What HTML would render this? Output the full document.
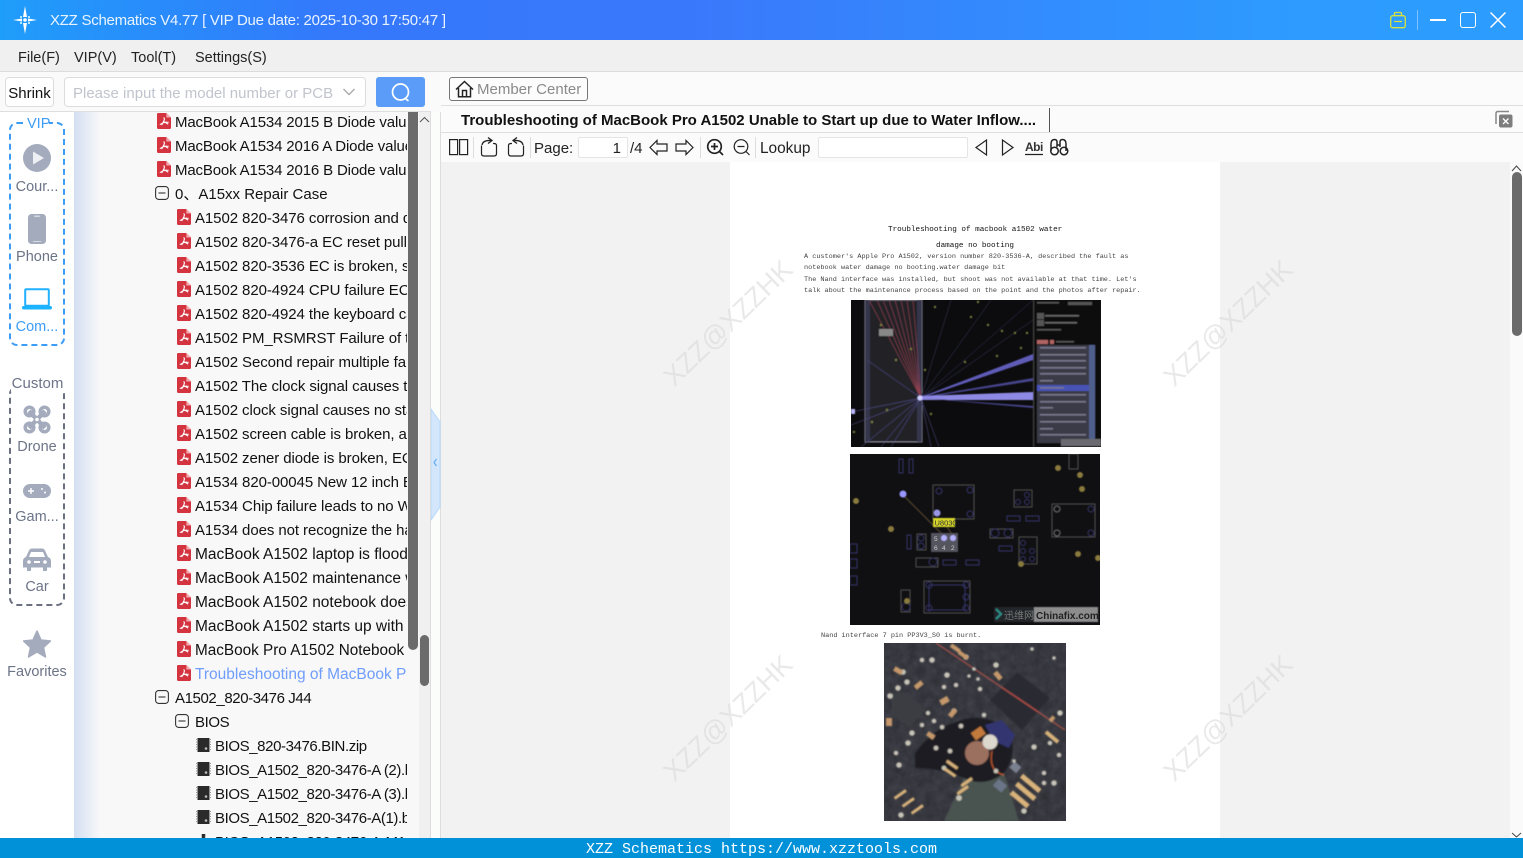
<!DOCTYPE html>
<html><head><meta charset="utf-8"><style>
*{box-sizing:border-box}
html,body{margin:0;padding:0;width:1523px;height:858px;overflow:hidden;background:#fafafa;font-family:"Liberation Sans","Noto Sans CJK SC",sans-serif;color:#111}
.a{position:absolute}
.t{position:absolute;white-space:nowrap;font-size:15px;line-height:26px;height:24px;overflow:hidden}
.r1{left:175px;width:232px}.r2{left:195px;width:212px;letter-spacing:-.08px}.r3{left:215px;width:192px}
.w{font-size:15.5px;letter-spacing:0}
.n{letter-spacing:-.15px}
.b{letter-spacing:-.4px}
.lb{position:absolute;left:9px;width:56px;text-align:center;font-size:14.5px;color:#6c7488;line-height:20px}
.ic{position:absolute;width:14px;height:16px}
.m{position:absolute;top:48px;font-size:14.5px;line-height:20px;color:#222}
.tb{position:absolute;font-size:15px;line-height:22px;color:#222}
.sep{position:absolute;top:137px;width:1px;height:21px;background:#ddd}
.pt{position:absolute;left:804px;font:6.85px/9px "Liberation Mono",monospace;color:#444;white-space:nowrap}
.wm{position:absolute;font-size:27px;line-height:36px;color:#d8d8d8;opacity:.55;transform:rotate(-44deg);white-space:nowrap;width:190px;text-align:center}
</style></head><body>
<svg width="0" height="0" style="position:absolute"><defs>
<symbol id="pdf" viewBox="0 0 15 18" preserveAspectRatio="none"><path d="M1 0H10L15 5V16.500Q15 18 13.500 18H1.500Q0 18 0 16.500V1.500Q0 0 1 0Z" fill="#d3343f"/><path d="M10 0V5H15Z" fill="#f3a9ae"/><path d="M7 5Q8.500 5.500 7.500 8.500L5 13.500M7 9.500L12 12.500M3 13L8 10.500Q10.500 10 12.500 10.500" fill="none" stroke="#fff" stroke-width="1.200"/></symbol>
<symbol id="minus" viewBox="0 0 14 14"><rect x=".6" y=".6" width="12.800" height="12.800" rx="3" fill="none" stroke="#333" stroke-width="1.100"/><path d="M3.500 7H10.500" stroke="#333" stroke-width="1.100"/></symbol>
<symbol id="chip" viewBox="0 0 15 14"><rect x="1.500" y="0" width="12" height="14" fill="#2a2a2a"/><path d="M0 1.500H2M0 4H2M0 6.500H2M0 9H2M0 11.500H2M13 1.500H15M13 4H15M13 6.500H15M13 9H15M13 11.500H15" stroke="#999" stroke-width="1"/><circle cx="10" cy="10.500" r="1.300" fill="#bbb"/></symbol>
<filter id="bl"><feGaussianBlur stdDeviation=".5"/></filter>
<filter id="bl2"><feGaussianBlur stdDeviation=".75"/></filter>
<filter id="tex" x="0" y="0" width="100%" height="100%" color-interpolation-filters="sRGB"><feTurbulence type="fractalNoise" baseFrequency=".12" numOctaves="3" seed="4"/><feColorMatrix values="0 0 0 0 .1 0 0 0 0 .1 0 0 0 0 .12 .55 0 0 0 0"/></filter>
</defs></svg>

<!-- title bar -->
<div class="a" style="left:0;top:0;width:1523px;height:40px;background:linear-gradient(90deg,#1f9dfb 0,#3478fb 22%,#3a78fb 45%,#2d9bff 85%,#2d9cff 100%)"></div>
<svg class="a" style="left:12px;top:5px" width="26" height="30" viewBox="0 0 26 30"><path d="M13 1L15 12H11ZM13 29L11 18H15ZM1 15L10 13.500V16.500ZM25 15L16 16.500V13.500Z" fill="#fff"/><circle cx="13" cy="15" r="1.800" fill="#fff"/><circle cx="9" cy="12" r="1" fill="#dff"/><circle cx="17" cy="12" r="1" fill="#dff"/><circle cx="9" cy="18" r="1" fill="#dff"/><circle cx="17" cy="18" r="1" fill="#dff"/></svg>
<div class="a" style="left:50px;top:12px;font-size:15px;letter-spacing:-.26px;line-height:18px;color:#e9f3ff;white-space:nowrap">XZZ Schematics V4.77 [ VIP Due date: 2025-10-30 17:50:47 ]</div>
<svg class="a" style="left:1389px;top:11px" width="18" height="18" viewBox="0 0 18 18" fill="none" stroke="#d6e33c" stroke-width="1.300"><rect x="1.700" y="4.700" width="14.600" height="12" rx="2"/><path d="M5.500 4.500V2.500Q5.500 1.500 6.500 1.500H11.500Q12.500 1.500 12.500 2.500V4.500M5 10.500H13"/></svg>
<div class="a" style="left:1417px;top:10px;width:1px;height:20px;background:#7fc0ff"></div>
<div class="a" style="left:1430px;top:19px;width:16px;height:2px;background:#fff"></div>
<div class="a" style="left:1460px;top:12px;width:16px;height:16px;border:1.600px solid #fff;border-radius:3px"></div>
<svg class="a" style="left:1490px;top:12px" width="16" height="16" stroke="#fff" stroke-width="1.500"><path d="M.5.500L15.500 15.500M15.500.500L.5 15.500"/></svg>

<!-- menu -->
<div class="a" style="left:0;top:40px;width:1523px;height:32px;background:#f0f0f0;border-bottom:1px solid #dcdcdc"></div>
<div class="m" style="left:18px">File(F)</div><div class="m" style="left:74px">VIP(V)</div><div class="m" style="left:131px">Tool(T)</div><div class="m" style="left:195px">Settings(S)</div>

<!-- left toolbar -->
<div class="a" style="left:0;top:72px;width:431px;height:40px;background:#fafafa;border-bottom:1px solid #dedede"></div>
<div class="a" style="left:5px;top:77px;width:49px;height:30px;background:#fff;border:1px solid #ddd;border-radius:4px;font-size:15px;line-height:31px;text-align:center;color:#111">Shrink</div>
<div class="a" style="left:64px;top:77px;width:302px;height:30px;background:#fff;border:1px solid #ddd;border-radius:4px;padding-left:8px;font-size:15px;line-height:31px;color:#c0c4cc;white-space:nowrap">Please input the model number or PCB</div>
<svg class="a" style="left:343px;top:88px" width="12" height="8" fill="none" stroke="#aaa" stroke-width="1.400"><path d="M.5 1L6 6.500L11.500 1"/></svg>
<div class="a" style="left:376px;top:77px;width:49px;height:30px;background:#5b9cf9;border-radius:3px"></div>
<svg class="a" style="left:390px;top:82px" width="22" height="21" fill="none" stroke="#fff" stroke-width="1.700"><circle cx="10.500" cy="10" r="8"/><path d="M15.500 16.500L18.500 19"/></svg>

<!-- sidebar -->
<div class="a" style="left:0;top:112px;width:74px;height:726px;background:#fff"></div>
<div class="a" style="left:9px;top:122px;width:56px;height:224px;border:2px dashed #3c9cf6;border-radius:8px"></div>
<div class="a" style="left:27px;top:114px;width:22px;height:18px;background:#fff;color:#3c9cf6;font-size:14.500px;line-height:20px;text-align:center">VIP</div>
<svg class="a" style="left:23px;top:144px" width="28" height="28"><circle cx="14" cy="14" r="14" fill="#a3abbd"/><path d="M10 7.500L21 14L10 20.500Z" fill="#eef0f4"/></svg>
<div class="lb" style="top:177px">Cour...</div>
<svg class="a" style="left:28px;top:214px" width="18" height="30"><rect width="18" height="30" rx="3.500" fill="#a3abbd"/><rect x="6" y="1.500" width="6" height="1.500" rx=".7" fill="#d5d9e2"/><rect x="5" y="27" width="8" height="1" fill="#d5d9e2"/></svg>
<div class="lb" style="top:247px">Phone</div>
<svg class="a" style="left:22px;top:288px" width="30" height="22"><rect x="3.200" y="1.200" width="23.600" height="16.600" rx="1" fill="none" stroke="#21b0ff" stroke-width="2"/><rect x="0" y="18" width="30" height="3.500" rx="1.700" fill="#1cb4ff"/></svg>
<div class="lb" style="top:317px;color:#3c9cf6">Com...</div>

<div class="a" style="left:9px;top:386px;width:56px;height:220px;border:2px dashed #6a7080;border-radius:8px"></div>
<div class="a" style="left:11px;top:374px;width:53px;height:18px;background:#fff;color:#6c7488;font-size:15px;line-height:20px;text-align:center">Custom</div>
<svg class="a" style="left:23px;top:405px" width="28" height="29" fill="none" stroke="#a3abbd"><path d="M6 6L22 23M22 6L6 23" stroke-width="4.500"/><circle cx="6.500" cy="6.500" r="4.300" stroke-width="3.500"/><circle cx="21.500" cy="6.500" r="4.300" stroke-width="3.500"/><circle cx="6.500" cy="22.500" r="4.300" stroke-width="3.500"/><circle cx="21.500" cy="22.500" r="4.300" stroke-width="3.500"/><circle cx="14" cy="14.500" r="2.500" fill="#fff" stroke-width="1.500"/></svg>
<div class="lb" style="top:437px">Drone</div>
<svg class="a" style="left:23px;top:484px" width="28" height="14"><rect width="28" height="14" rx="7" fill="#a3abbd"/><path d="M5 7H11M8 4V10" stroke="#fff" stroke-width="1.400"/><circle cx="19" cy="5" r="1" fill="#fff"/><circle cx="22" cy="8.500" r="1" fill="#fff"/></svg>
<div class="lb" style="top:507px">Gam...</div>
<svg class="a" style="left:23px;top:548px" width="28" height="23"><path d="M3 9L6 2.500Q7 .5 9 .5H19Q21 .5 22 2.500L25 9Q28 10 28 13V19.500H24V23H20V19.500H8V23H4V19.500H0V13Q0 10 3 9Z" fill="#a3abbd"/><path d="M6 9L8 4H20L22 9Z" fill="#fff"/><circle cx="6" cy="14" r="1.800" fill="#fff"/><circle cx="22" cy="14" r="1.800" fill="#fff"/><rect x="11" y="13" width="6" height="2" fill="#fff"/></svg>
<div class="lb" style="top:577px">Car</div>
<svg class="a" style="left:23px;top:630px" width="28" height="28"><path d="M14 1L18 10L27.500 11L20.500 17.500L22.500 27L14 22L5.500 27L7.500 17.500L.5 11L10 10Z" fill="#a3abbd" stroke="#a3abbd" stroke-linejoin="round" stroke-width="1.500"/></svg>
<div class="lb" style="top:662px;left:2px;width:70px">Favorites</div>

<!-- tree -->
<div class="a" style="left:74px;top:112px;width:334px;height:726px;background:linear-gradient(90deg,#d3dff2 0,#f8f8f8 26px)"></div>
<div class="a" style="left:408px;top:112px;width:11px;height:726px;background:#f8f8f8"></div>
<div class="a" style="left:419px;top:112px;width:11px;height:726px;background:#f0f0f0"></div>
<div class="a" style="left:408px;top:112px;width:10px;height:538px;background:#6b6b6b;border-radius:0 0 5px 5px"></div>
<div class="a" style="left:420px;top:635px;width:9px;height:51px;background:#6b6b6b;border-radius:5px"></div>
<svg class="a" style="left:419px;top:116px" width="11" height="8" fill="none" stroke="#555"><path d="M1 6L5.500 1.500L10 6"/></svg>
<div class="a" style="left:430px;top:112px;width:11px;height:726px;background:#fbfdfb;border-left:1px solid #ddd;border-right:1px solid #ddd"></div>
<svg class="a" style="left:431px;top:408px" width="10" height="113"><path d="M0 1L9 14V99L0 112Z" fill="#d3e6fb" stroke="#b5d8fb"/><path d="M5.500 51L3 54.500L5.500 58" fill="none" stroke="#62aef5" stroke-width="1.200"/></svg>

<svg class="ic" style="left:157px;top:113px"><use href="#pdf"/></svg><div class="t r1 n" style="top:110px">MacBook A1534 2015 B Diode value measurement</div>
<svg class="ic" style="left:157px;top:137px"><use href="#pdf"/></svg><div class="t r1 n" style="top:134px">MacBook A1534 2016 A Diode value measurement</div>
<svg class="ic" style="left:157px;top:161px"><use href="#pdf"/></svg><div class="t r1 n" style="top:158px">MacBook A1534 2016 B Diode value measurement</div>
<svg class="a" style="left:155px;top:186px" width="14" height="14"><use href="#minus"/></svg><div class="t r1" style="top:182px">0、A15xx Repair Case</div>
<svg class="ic" style="left:177px;top:209px"><use href="#pdf"/></svg><div class="t r2" style="top:206px">A1502 820-3476 corrosion and damage</div>
<svg class="ic" style="left:177px;top:233px"><use href="#pdf"/></svg><div class="t r2" style="top:230px">A1502 820-3476-a EC reset pull-up</div>
<svg class="ic" style="left:177px;top:257px"><use href="#pdf"/></svg><div class="t r2" style="top:254px">A1502 820-3536 EC is broken, so no</div>
<svg class="ic" style="left:177px;top:281px"><use href="#pdf"/></svg><div class="t r2" style="top:278px">A1502 820-4924 CPU failure EC power</div>
<svg class="ic" style="left:177px;top:305px"><use href="#pdf"/></svg><div class="t r2" style="top:302px">A1502 820-4924 the keyboard cannot</div>
<svg class="ic" style="left:177px;top:329px"><use href="#pdf"/></svg><div class="t r2" style="top:326px">A1502 PM_RSMRST Failure of trigger</div>
<svg class="ic" style="left:177px;top:353px"><use href="#pdf"/></svg><div class="t r2" style="top:350px">A1502 Second repair multiple faults</div>
<svg class="ic" style="left:177px;top:377px"><use href="#pdf"/></svg><div class="t r2" style="top:374px">A1502 The clock signal causes the</div>
<svg class="ic" style="left:177px;top:401px"><use href="#pdf"/></svg><div class="t r2" style="top:398px">A1502 clock signal causes no startup</div>
<svg class="ic" style="left:177px;top:425px"><use href="#pdf"/></svg><div class="t r2" style="top:422px">A1502 screen cable is broken, and</div>
<svg class="ic" style="left:177px;top:449px"><use href="#pdf"/></svg><div class="t r2" style="top:446px">A1502 zener diode is broken, ECU</div>
<svg class="ic" style="left:177px;top:473px"><use href="#pdf"/></svg><div class="t r2" style="top:470px">A1534 820-00045 New 12 inch EC</div>
<svg class="ic" style="left:177px;top:497px"><use href="#pdf"/></svg><div class="t r2" style="top:494px">A1534 Chip failure leads to no Wi-Fi</div>
<svg class="ic" style="left:177px;top:521px"><use href="#pdf"/></svg><div class="t r2" style="top:518px">A1534 does not recognize the hard</div>
<svg class="ic" style="left:177px;top:545px"><use href="#pdf"/></svg><div class="t r2 w" style="top:542px">MacBook A1502 laptop is flooded</div>
<svg class="ic" style="left:177px;top:569px"><use href="#pdf"/></svg><div class="t r2 w" style="top:566px">MacBook A1502 maintenance with</div>
<svg class="ic" style="left:177px;top:593px"><use href="#pdf"/></svg><div class="t r2 w" style="top:590px">MacBook A1502 notebook does not</div>
<svg class="ic" style="left:177px;top:617px"><use href="#pdf"/></svg><div class="t r2 w" style="top:614px">MacBook A1502 starts up with water</div>
<svg class="ic" style="left:177px;top:641px"><use href="#pdf"/></svg><div class="t r2" style="top:638px;font-size:15.3px;letter-spacing:0">MacBook Pro A1502 Notebook water</div>
<svg class="ic" style="left:177px;top:665px"><use href="#pdf"/></svg><div class="t r2 w" style="top:662px;color:#6f9dfb">Troubleshooting of MacBook Pro A1502</div>
<svg class="a" style="left:155px;top:690px" width="14" height="14"><use href="#minus"/></svg><div class="t r1 b" style="top:686px">A1502_820-3476 J44</div>
<svg class="a" style="left:175px;top:714px" width="14" height="14"><use href="#minus"/></svg><div class="t r2 b" style="top:710px">BIOS</div>
<svg class="a" style="left:196px;top:738px" width="15" height="14"><use href="#chip"/></svg><div class="t r3 b" style="top:734px">BIOS_820-3476.BIN.zip</div>
<svg class="a" style="left:196px;top:762px" width="15" height="14"><use href="#chip"/></svg><div class="t r3 b" style="top:758px">BIOS_A1502_820-3476-A (2).bin</div>
<svg class="a" style="left:196px;top:786px" width="15" height="14"><use href="#chip"/></svg><div class="t r3 b" style="top:782px">BIOS_A1502_820-3476-A (3).bin</div>
<svg class="a" style="left:196px;top:810px" width="15" height="14"><use href="#chip"/></svg><div class="t r3 b" style="top:806px">BIOS_A1502_820-3476-A(1).bin</div>
<svg class="a" style="left:196px;top:834px" width="15" height="4"><use href="#chip"/></svg><div class="t r3 b" style="top:830px">BIOS_A1502_820-3476-A-M1.bin</div>

<!-- right header -->
<div class="a" style="left:441px;top:72px;width:1082px;height:90px;background:#fbfbfb"></div>
<div class="a" style="left:441px;top:105px;width:1082px;height:1px;background:#dedede"></div>
<div class="a" style="left:441px;top:132px;width:1082px;height:1px;background:#dedede"></div>
<div class="a" style="left:449px;top:77px;width:139px;height:24px;border:1px solid #777;border-radius:3px;background:#fcfcfc"></div>
<svg class="a" style="left:455px;top:80px" width="19" height="18" fill="none" stroke="#222" stroke-width="1.500"><path d="M1 9.500L9.500 1.500L18 9.500M3.500 8V16.800H15.500V8M7.500 16.800V10.500H11.500V16.800"/></svg>
<div class="tb" style="left:477px;top:79px;color:#8a8a8a">Member Center</div>
<div class="a" style="left:461px;top:110px;font-size:15px;font-weight:bold;line-height:21px;color:#111;white-space:nowrap">Troubleshooting of MacBook Pro A1502 Unable to Start up due to Water Inflow....</div>
<div class="a" style="left:1049px;top:108px;width:1px;height:24px;background:#555"></div>
<svg class="a" style="left:1494px;top:110px" width="19" height="18"><path d="M2 14V3.500Q2 1.500 4 1.500H15" fill="none" stroke="#888" stroke-width="1.500"/><rect x="5" y="4.500" width="13.500" height="13" rx="2" fill="#7d7d7d"/><path d="M9 8.500L14.500 14M14.500 8.500L9 14" stroke="#fff" stroke-width="1.300"/></svg>

<!-- pdf toolbar -->
<svg class="a" style="left:449px;top:137px" width="625" height="21" fill="none" stroke="#222" stroke-width="1.200">
<rect x=".6" y="2.600" width="8" height="15"/><rect x="10.600" y="2.600" width="8" height="15"/>
<path d="M32.500 8.500V16.500Q32.500 19 35 19H45Q47.500 19 47.500 16.500V8.500Q47.500 6.500 45 6.500H44"/><path d="M33 8Q34 3 42 3.500M39 .5L43 3.500L39 6.500" stroke-width="1.300"/>
<path d="M74.500 8.500V16.500Q74.500 19 72 19H62Q59.500 19 59.500 16.500V8.500Q59.500 6.500 62 6.500H63"/><path d="M74 8Q73 3 65 3.500M68 .5L64 3.500L68 6.500" stroke-width="1.300"/>
<path d="M201 10.500L208 3.500V7H218V14H208V17.500Z"/><path d="M244 10.500L237 3.500V7H227V14H237V17.500Z"/>
<circle cx="265.500" cy="9.500" r="6.800" stroke-width="1.700"/><path d="M270.500 14.500L274 18M262 9.500H269M265.500 6V13" stroke-width="1.700"/>
<circle cx="292" cy="9.500" r="6.800"/><path d="M297 14.500L300.500 18M288.500 9.500H295.500"/>
<path d="M527 10.500L537.500 3V18Z"/><path d="M564 10.500L553.500 3V18Z"/>
<path d="M576 17.500H594" stroke-width="1.300"/>
<path d="M602 14V7Q602 2.500 605.500 2.500Q608 2.500 608 5V10M611 10V5Q611 2.500 613.500 2.500Q617 2.500 617 7V14M608 8H611" stroke-width="1.500"/><circle cx="605.500" cy="14" r="3.800" stroke-width="1.500"/><circle cx="615" cy="14" r="3.800" stroke-width="1.500"/>
</svg>
<div class="sep" style="left:473px"></div><div class="sep" style="left:530px"></div><div class="sep" style="left:700px"></div><div class="sep" style="left:755px"></div>
<div class="tb" style="left:534px;top:138px">Page:</div>
<div class="a" style="left:578px;top:137px;width:50px;height:21px;background:#fff;border:1px solid #e4e4e4;border-radius:2px;text-align:right;padding-right:6px;font-size:15px;line-height:21px;color:#222">1</div>
<div class="tb" style="left:630px;top:138px">/4</div>
<div class="tb" style="left:760px;top:138px;font-size:15.4px">Lookup</div>
<div class="a" style="left:818px;top:137px;width:150px;height:21px;background:#fff;border:1px solid #e4e4e4;border-radius:2px"></div>
<div class="a" style="left:1025px;top:140px;font-size:12px;font-weight:bold;line-height:14px;color:#333;letter-spacing:-.5px">Abi</div>

<!-- pdf view -->
<div class="a" style="left:441px;top:162px;width:1069px;height:676px;background:#f2f2f2"></div>
<div class="a" style="left:1510px;top:162px;width:13px;height:676px;background:#fafafa"></div>
<div class="a" style="left:730px;top:162px;width:490px;height:676px;background:#fff"></div>
<svg class="a" style="left:1511px;top:165px" width="11" height="7" fill="none" stroke="#444"><path d="M1 6L5.500 1L10 6"/></svg>
<div class="a" style="left:1512px;top:172px;width:10px;height:164px;background:#6b6b6b;border-radius:5px"></div>
<svg class="a" style="left:1511px;top:832px" width="11" height="6" fill="none" stroke="#444"><path d="M1 1L5.500 5L10 1"/></svg>

<div class="a" style="left:888px;top:225px;font:7.650px/10px 'Liberation Mono',monospace;color:#111;white-space:nowrap">Troubleshooting of macbook a1502 water</div>
<div class="a" style="left:936px;top:241px;font:7.650px/10px 'Liberation Mono',monospace;color:#111;white-space:nowrap">damage no booting</div>
<div class="pt" style="top:253px">A customer's Apple Pro A1502, version number 820-3536-A, described the fault as</div>
<div class="pt" style="top:264px">notebook water damage no booting.water damage bit</div>
<div class="pt" style="top:276px">The Nand interface was installed, but shoot was not available at that time. Let's</div>
<div class="pt" style="top:287px">talk about the maintenance process based on the point and the photos after repair.</div>
<div class="pt" style="top:632px;left:821px">Nand interface 7 pin PP3V3_S0 is burnt.</div>

<!-- image 1 -->
<svg class="a" style="left:851px;top:300px" width="250" height="147" viewBox="0 0 250 147"><rect width="250" height="147" fill="#0c0c0e"/>
<g filter="url(#bl)">
<rect x="14" y="0" width="57" height="142" fill="#232326" stroke="#8f8fa3"/>
<rect x="14" y="0" width="5" height="142" fill="#34344c"/><rect x="66" y="0" width="5" height="142" fill="#34344c"/>
<g stroke="#8a4050" stroke-width=".6"><path d="M70 98L18 0M70 98L26 0M70 98L32 0M70 98L38 0M70 98L44 0M70 98L50 0M70 98L56 0M70 98L62 0"/></g>
<g stroke="#54508f" stroke-width=".5"><path d="M70 98L0 112M70 98L0 125M70 98L10 147M70 98L40 147M70 98L80 147M70 98L88 147M70 98L16 60M70 98L30 147"/></g>
<g stroke="#3c3b62" stroke-width=".5"><path d="M70 98L182 0M70 98L182 20M70 98L140 0M70 98L100 0"/></g>
<path d="M70 97L182 54V60L70 98Z" fill="#5f5bb8"/><path d="M70 97L182 78V81L70 98Z" fill="#46448c"/><path d="M70 96L182 92V100L70 100Z" fill="#8e89e4"/><path d="M70 98L182 106V108Z" fill="#46448c"/>
<circle cx="69" cy="98" r="2.500" fill="#cfcfff"/><rect x="0" y="109" width="4" height="5" fill="#bbb9ff"/>
<g fill="#777a40"><circle cx="84" cy="7" r="1.200"/><circle cx="127" cy="2" r="1.200"/><circle cx="120" cy="17" r="1.200"/><circle cx="137" cy="25" r="1.200"/><circle cx="151" cy="31" r="1.200"/><circle cx="164" cy="33" r="1.200"/><circle cx="176" cy="33" r="1.200"/><circle cx="146" cy="56" r="1.200"/><circle cx="114" cy="62" r="1.200"/><circle cx="74" cy="70" r="1.200"/><circle cx="60" cy="49" r="1.200"/><circle cx="80" cy="114" r="1.200"/><circle cx="36" cy="110" r="1.200"/><circle cx="21" cy="122" r="1.200"/><circle cx="3" cy="132" r="1.200"/><circle cx="30" cy="25" r="1.200"/><circle cx="45" cy="60" r="1.200"/><circle cx="170" cy="48" r="1.200"/></g>
<rect x="28" y="29" width="14" height="7" fill="#888"/>
<rect x="183" y="0" width="67" height="147" fill="#0b0b0d"/><rect x="182" y="0" width="1" height="147" fill="#444"/>
<rect x="186" y="13" width="7" height="6" fill="#555"/><rect x="186" y="20" width="7" height="6" fill="#555"/>
<rect x="194" y="15" width="34" height="1.500" fill="#666"/><rect x="194" y="22" width="32" height="1.500" fill="#666"/><rect x="186" y="29" width="24" height="1.500" fill="#555"/>
<rect x="186" y="40" width="11" height="4" fill="#b06464"/><rect x="199" y="40" width="4" height="4" fill="#b06464"/><rect x="205" y="41" width="18" height="1.500" fill="#555"/>
<rect x="186" y="45" width="58" height="98" fill="#3a3a46"/><rect x="238" y="45" width="6" height="98" fill="#4f5e8c"/>
<rect x="186" y="85" width="52" height="6" fill="#4a52b5"/>
<g fill="#77778c"><rect x="189" y="47" width="46" height="1.600"/><rect x="189" y="54" width="46" height="1.600"/><rect x="189" y="60" width="46" height="1.600"/><rect x="189" y="67" width="46" height="1.600"/><rect x="189" y="73" width="46" height="1.600"/><rect x="189" y="80" width="13" height="1.600"/><rect x="189" y="87" width="24" height="1.600"/><rect x="189" y="94" width="46" height="1.600"/><rect x="189" y="101" width="46" height="1.600"/><rect x="189" y="107" width="13" height="1.600"/><rect x="189" y="114" width="46" height="1.600"/><rect x="189" y="121" width="46" height="1.600"/><rect x="189" y="128" width="13" height="1.600"/><rect x="189" y="134" width="46" height="1.600"/></g>
<rect x="210" y="139" width="40" height="7" fill="#6b6b70"/>
<rect x="186" y="2" width="22" height="1.500" fill="#555"/><rect x="217" y="2" width="24" height="3" fill="#555"/></g></svg>

<!-- image 2 -->
<svg class="a" style="left:850px;top:454px" width="250" height="171" viewBox="0 0 250 171"><rect width="250" height="171" fill="#101012"/>
<g filter="url(#bl)" fill="none" stroke="#34346c">
<path d="M52 40L97 85M95 70L105 85" stroke="#5b4c32"/>
<rect x="83" y="31" width="41" height="34" stroke="#505050"/><circle cx="89" cy="37" r="3"/><circle cx="120" cy="36" r="3"/><circle cx="120" cy="60" r="3"/>
<rect x="164" y="36" width="18" height="17" stroke="#505050"/><circle cx="168" cy="48" r="2.500"/><circle cx="177" cy="48" r="2.500"/><circle cx="177" cy="41" r="2.500"/>
<rect x="202" y="50" width="43" height="33" stroke="#505050"/><circle cx="207" cy="55" r="3" stroke="#777"/><circle cx="241" cy="55" r="3"/><circle cx="207" cy="79" r="3" stroke="#777"/><circle cx="241" cy="79" r="3"/>
<rect x="49" y="5" width="4" height="14"/><rect x="59" y="5" width="4" height="14"/><rect x="219" y="0" width="9" height="15" stroke="#505050"/>
<rect x="157" y="62" width="13" height="5"/><rect x="176" y="62" width="13" height="5"/>
<rect x="140" y="75" width="23" height="9" stroke="#505050"/><circle cx="145" cy="79" r="4"/><circle cx="158" cy="79" r="4"/>
<rect x="169" y="83" width="18" height="27" stroke="#505050"/><circle cx="173" cy="89" r="2.500"/><circle cx="173" cy="97" r="2.500"/><circle cx="173" cy="105" r="2.500"/><circle cx="182" cy="97" r="2.500"/><circle cx="182" cy="105" r="2.500"/>
<rect x="149" y="92" width="13" height="5"/><rect x="66" y="104" width="22" height="9" stroke="#505050"/><circle cx="83" cy="108" r="4"/>
<rect x="93" y="106" width="13" height="5"/><rect x="116" y="106" width="13" height="5"/>
<rect x="57" y="81" width="4" height="14"/><rect x="67" y="80" width="9" height="16" stroke="#505050"/><circle cx="71" cy="84" r="3"/><circle cx="71" cy="92" r="3"/>
<rect x="0" y="90" width="7" height="9"/><rect x="0" y="105" width="7" height="9"/><rect x="0" y="122" width="7" height="9"/>
<rect x="74" y="127" width="46" height="32" stroke="#505050"/><rect x="79" y="131" width="36" height="25"/><circle cx="116" cy="131" r="3"/><circle cx="116" cy="143" r="3"/><circle cx="116" cy="154" r="3"/><circle cx="79" cy="154" r="3"/><circle cx="79" cy="131" r="3"/>
<rect x="51" y="136" width="9" height="22" stroke="#505050"/><circle cx="56" cy="153" r="4"/>
</g>
<g filter="url(#bl)">
<circle cx="53" cy="40" r="3.500" fill="#9a96ff"/><circle cx="87" cy="59" r="3.500" fill="#9a96e8"/>
<rect x="83" y="64" width="22" height="9" fill="#d5d52a"/>
<rect x="81" y="79" width="27" height="19" fill="#55555f"/><circle cx="94" cy="84" r="3" fill="#b5b3ff"/><circle cx="103" cy="84" r="3" fill="#b5b3ff"/>
<g fill="#8a7a3c"><circle cx="6" cy="47" r="3"/><circle cx="41" cy="75" r="3"/><circle cx="208" cy="14" r="3"/><circle cx="230" cy="21" r="3"/><circle cx="232" cy="35" r="3"/><circle cx="228" cy="100" r="3"/><circle cx="248" cy="104" r="3"/><circle cx="171" cy="110" r="3"/><circle cx="57" cy="147" r="3"/></g>
<rect x="144" y="153" width="44" height="15" fill="#23262a"/><rect x="184" y="153" width="64" height="15" fill="#8d8d8d"/>
<path d="M146 155L151 160L146 165" stroke="#2e8f88" stroke-width="2" fill="none"/></g>
<text x="84.500" y="71.500" font-size="7.500" fill="#333" font-family="'Liberation Sans',sans-serif">U8030</text>
<text x="84" y="87" font-size="6.500" fill="#ccc" font-family="'Liberation Sans',sans-serif">5</text>
<text x="84" y="96" font-size="6.500" fill="#ccc" font-family="'Liberation Sans',sans-serif">6</text>
<text x="92" y="96" font-size="6.500" fill="#ccc" font-family="'Liberation Sans',sans-serif">4</text>
<text x="101" y="96" font-size="6.500" fill="#ccc" font-family="'Liberation Sans',sans-serif">2</text>
<text x="154" y="165" font-size="10" fill="#777" font-family="'Noto Sans CJK SC',sans-serif">迅维网</text>
<text x="186" y="165" font-size="10" font-weight="bold" fill="#222" font-family="'Liberation Sans',sans-serif">Chinafix.com</text></svg>

<!-- image 3 -->
<svg class="a" style="left:884px;top:643px" width="182" height="178" viewBox="0 0 182 178"><rect width="182" height="178" fill="#43444c"/><rect width="182" height="178" filter="url(#tex)"/>
<g filter="url(#bl2)">
<path d="M8 50L25 50L41 68L25 84L8 72Z" fill="#3a3c42"/>
<path d="M60 178L80 135L120 130L135 178Z" fill="#4a5250"/>
<path d="M31 110Q50 85 70 80Q95 68 124 85Q135 110 120 130Q100 145 80 135Q55 125 31 125Z" fill="#1a1a22"/>
<path d="M106 57L133 29L166 55L138 87Z" fill="#2a2b30"/>
<path d="M101 82L118 77L131 92L125 105L110 98Z" fill="#33356f"/>
<path d="M52 0L181 87" stroke="#cf5a4f" stroke-width="1" fill="none"/>
<circle cx="93" cy="110" r="12" fill="#9c6f5e"/><circle cx="106" cy="99" r="7.500" fill="#dcd8ce"/><rect x="88" y="86" width="12" height="9" fill="#c27a3c" transform="rotate(-35 94 90)"/>
<path d="M108 108Q104 128 120 132" stroke="#d2602a" fill="none"/>
<rect x="127" y="120" width="9" height="8" fill="#7a8090" transform="rotate(40 131 124)"/><rect x="111" y="138" width="11" height="9" fill="#6a7488" transform="rotate(40 116 142)"/>
<g fill="#c8c4b8"><circle cx="6" cy="53" r="2.800"/><circle cx="19" cy="29" r="2.800"/><circle cx="23" cy="39" r="2.800"/><circle cx="14" cy="45" r="2.800"/><circle cx="38" cy="17" r="2.300"/><circle cx="48" cy="17" r="2.800"/><circle cx="63" cy="32" r="2.800"/><circle cx="72" cy="42" r="2.300"/><circle cx="60" cy="44" r="2.300"/><circle cx="82" cy="14" r="2.800"/><circle cx="112" cy="22" r="2.800"/><circle cx="70" cy="68" r="2.800"/><circle cx="44" cy="70" r="2.300"/><circle cx="50" cy="78" r="2.300"/><circle cx="38" cy="82" r="2.300"/><circle cx="58" cy="84" r="2.300"/><circle cx="28" cy="90" r="2.800"/><circle cx="24" cy="100" r="2.800"/><circle cx="12" cy="110" r="2.300"/><circle cx="15" cy="122" r="2.800"/><circle cx="77" cy="83" r="2.300"/><circle cx="100" cy="72" r="2.300"/><circle cx="150" cy="104" r="2.800"/><circle cx="176" cy="70" r="2.800"/><circle cx="160" cy="130" r="2.300"/><circle cx="170" cy="140" r="2.800"/><circle cx="75" cy="155" r="2.800"/><circle cx="17" cy="172" r="2.800"/><circle cx="140" cy="168" r="2.800"/><circle cx="166" cy="100" r="2.300"/><circle cx="175" cy="112" r="2.300"/><circle cx="85" cy="33" r="1.800"/><circle cx="94" cy="36" r="1.800"/><circle cx="90" cy="26" r="1.800"/><circle cx="96" cy="46" r="2.300"/><circle cx="60" cy="125" r="2.300"/><circle cx="112" cy="128" r="2.300"/><circle cx="52" cy="105" r="2.300"/><circle cx="66" cy="108" r="2.300"/><circle cx="130" cy="118" r="1.800"/><circle cx="148" cy="6" r="1.800"/><circle cx="170" cy="15" r="1.800"/><circle cx="160" cy="140" r="2.300"/></g>
<g fill="#c4986a"><rect x="66" y="3" width="11" height="4" transform="rotate(35 71 5)"/><rect x="74" y="10" width="11" height="4" transform="rotate(35 79 12)"/><rect x="56" y="55" width="9" height="6" transform="rotate(-30 60 58)"/><rect x="64" y="68" width="9" height="5" transform="rotate(-50 68 70)"/><rect x="110" y="30" width="9" height="5" transform="rotate(50 114 32)"/><rect x="10" y="25" width="9" height="5" transform="rotate(30 14 27)"/><rect x="30" y="40" width="9" height="5" transform="rotate(-40 34 42)"/><rect x="2" y="75" width="6" height="8"/><rect x="43" y="90" width="8" height="5" transform="rotate(35 47 92)"/><rect x="165" y="74" width="6" height="4" transform="rotate(-50 168 76)"/></g>
<g fill="#d8b27a"><rect x="135" y="138" width="24" height="5" transform="rotate(40 147 140)"/><rect x="130" y="146" width="24" height="5" transform="rotate(40 142 148)"/><rect x="125" y="154" width="22" height="5" transform="rotate(40 136 156)"/><rect x="62" y="120" width="13" height="3" transform="rotate(35 68 121)"/><rect x="60" y="128" width="13" height="3" transform="rotate(35 66 129)"/><rect x="76" y="138" width="13" height="3" transform="rotate(-35 82 139)"/><rect x="72" y="146" width="13" height="3" transform="rotate(-35 78 147)"/><rect x="9" y="150" width="14" height="3" transform="rotate(-35 16 151)"/><rect x="17" y="158" width="14" height="3" transform="rotate(-35 24 159)"/><rect x="26" y="165" width="14" height="3" transform="rotate(-35 33 166)"/><rect x="160" y="92" width="16" height="4" transform="rotate(40 168 94)"/></g>
</g></svg>

<!-- watermarks -->
<div class="wm" style="left:633px;top:305px">XZZ@XZZHK</div>
<div class="wm" style="left:1133px;top:305px">XZZ@XZZHK</div>
<div class="wm" style="left:633px;top:700px">XZZ@XZZHK</div>
<div class="wm" style="left:1133px;top:700px">XZZ@XZZHK</div>

<!-- status -->
<div class="a" style="left:0;top:838px;width:1523px;height:20px;background:#0091d8;color:#fff;text-align:center;font:15px/23px 'Liberation Mono',monospace;white-space:nowrap;overflow:hidden">XZZ Schematics https://www.xzztools.com</div>
</body></html>
